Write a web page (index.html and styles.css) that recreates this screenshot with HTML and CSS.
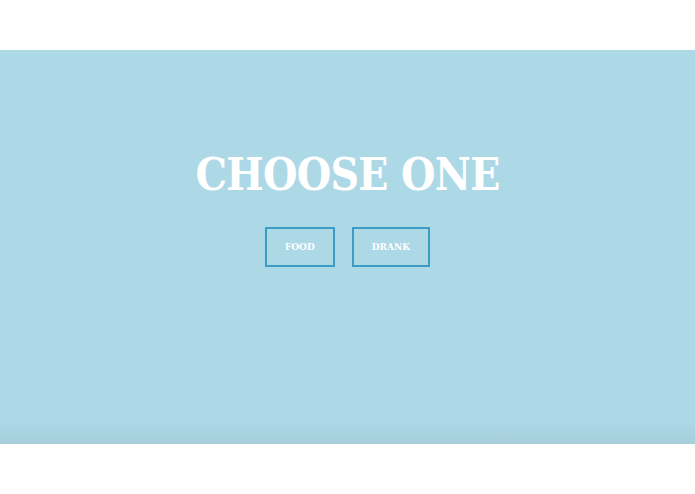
FILE: index.html
```html
<!DOCTYPE html>
<html lang="en">
<head>
    <meta charset="UTF-8">
    <meta name="viewport" content="width=device-width, initial-scale=1.0">
    <title>Choose One</title>
    <link rel="stylesheet" href="styles.css">
</head>
<body>
    <section class="hero">
        <h1 class="hero-title">CHOOSE ONE</h1>
        <div class="choices">
            <button class="choice">FOOD</button>
            <button class="choice">DRANK</button>
        </div>
    </section>
</body>
</html>
```

FILE: styles.css
```css
body {
    margin: 0;
    padding: 50px 0;
    background-color: #ffffff;
    font-family: "DejaVu Serif", Georgia, serif;
}

.hero {
    height: 394px;
    background: linear-gradient(to bottom, #add8e6 0, #add8e6 370px, #a6cfdb 394px);
    display: flex;
    flex-direction: column;
    align-items: center;
    box-sizing: border-box;
    padding-top: 98px;
}

.hero-title {
    margin: 0;
    color: #ffffff;
    font-size: 44px;
    font-weight: bold;
    font-stretch: condensed;
    letter-spacing: -0.7px;
    line-height: 54px;
}

.choices {
    display: flex;
    gap: 17px;
    margin-top: 25px;
}

.choice {
    height: 40px;
    padding: 0 18px;
    background: transparent;
    border: 2px solid #3b9cc6;
    color: #ffffff;
    font-family: "DejaVu Serif", Georgia, serif;
    font-size: 9px;
    font-weight: bold;
    cursor: pointer;
}
```
